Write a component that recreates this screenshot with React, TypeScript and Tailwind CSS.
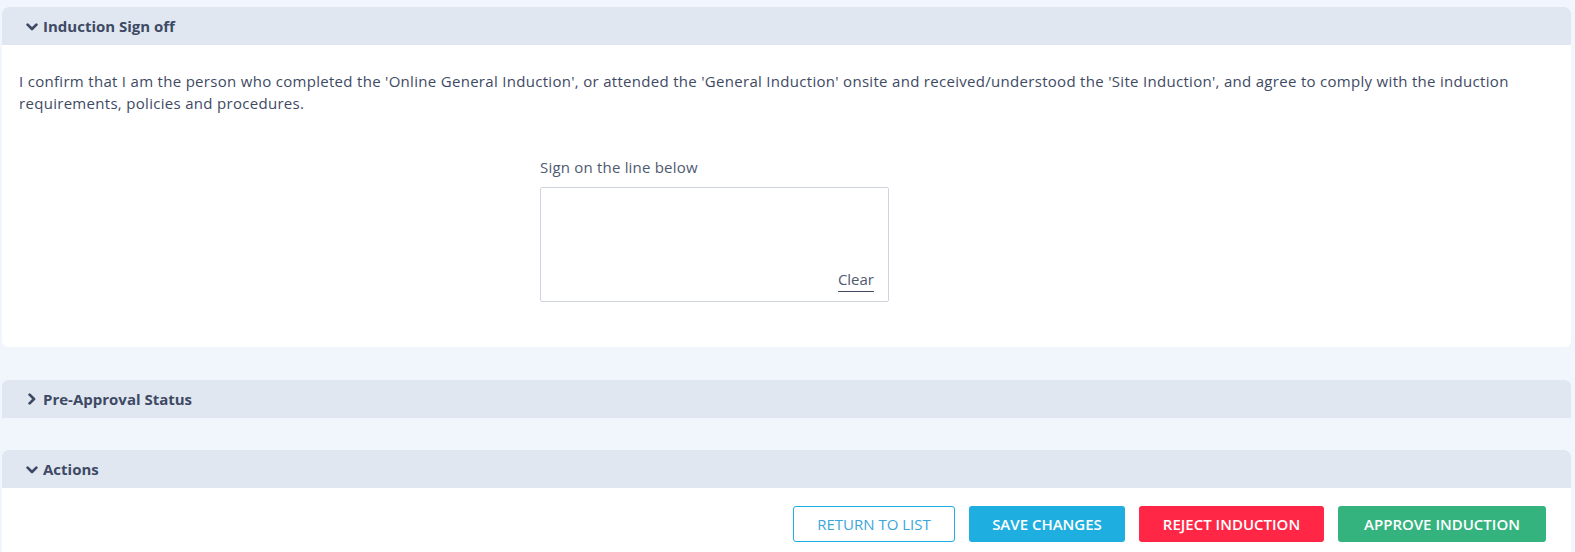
function Chevron({ open }: { open: boolean }) {
  return open ? (
    <svg width="12" height="8" viewBox="0 0 12 8" className="mt-[1px] shrink-0">
      <path d="M1.6 1.6 L6 6 L10.4 1.6" fill="none" stroke="currentColor" strokeWidth="2.7" strokeLinecap="round" strokeLinejoin="round" />
    </svg>
  ) : (
    <svg width="12" height="12" viewBox="0 0 12 12" className="shrink-0">
      <path d="M3.6 1.6 L8 6 L3.6 10.4" fill="none" stroke="currentColor" strokeWidth="2.7" strokeLinecap="round" strokeLinejoin="round" />
    </svg>
  );
}

function SectionHeader({ title, open }: { title: string; open: boolean }) {
  return (
    <div className="flex h-[38px] items-center gap-[5px] rounded-t-[6px] bg-[#e1e7f1] pl-[24px] text-[15px] font-bold text-[#3e4a64]">
      <Chevron open={open} />
      <span>{title}</span>
    </div>
  );
}

export default function App() {
  return (
    <div
      className="h-[552px] overflow-hidden bg-[#f1f5fc] pl-[2px] pr-[4px] pt-[7px] text-[#3e4a64]"
      style={{ fontFamily: '"Open Sans", "Liberation Sans", sans-serif' }}
    >
      <div className="overflow-hidden rounded-[6px] bg-white">
        <SectionHeader title="Induction Sign off" open />
        <div className="px-[17px] pb-[45px] pt-[25px]">
          <p className="text-[15px] leading-[22px] tracking-[0.3px] text-[#3e4a64]">
            I confirm that I am the person who completed the 'Online General Induction', or attended the 'General Induction' onsite and received/understood the 'Site Induction', and agree to comply with the induction requirements, policies and procedures.
          </p>
          <div className="mt-[42px] flex justify-center pr-[144px]">
            <div className="w-[349px]">
              <div className="text-[15px] leading-[22px] tracking-[0.2px] text-[#4f5a70]">Sign on the line below</div>
              <div className="mt-[9px] flex h-[115px] items-end justify-end rounded-[2px] border border-[#cfd3de] px-[14px] pb-[9px]">
                <span className="border-b border-[#3e4a64] pb-[4px] text-[15px] leading-[16px] text-[#4f5a70]">Clear</span>
              </div>
            </div>
          </div>
        </div>
      </div>

      <div className="mt-[33px] overflow-hidden rounded-t-[6px]">
        <SectionHeader title="Pre-Approval Status" open={false} />
      </div>

      <div className="mt-[32px] overflow-hidden rounded-t-[6px] bg-white">
        <SectionHeader title="Actions" open />
        <div className="flex justify-end gap-[14px] px-[25px] pb-[12px] pt-[18px] text-[15px]">
          <button className="h-[36px] w-[162px] rounded-[3px] border border-[#1eaee0] bg-white text-[#3aa6da]">
            RETURN TO LIST
          </button>
          <button className="h-[36px] w-[156px] rounded-[3px] bg-[#1eaee0] font-semibold text-white">
            SAVE CHANGES
          </button>
          <button className="h-[36px] w-[185px] rounded-[3px] bg-[#ff2745] font-semibold text-white">
            REJECT INDUCTION
          </button>
          <button className="h-[36px] w-[208px] rounded-[3px] bg-[#34b37f] font-semibold text-white">
            APPROVE INDUCTION
          </button>
        </div>
      </div>
    </div>
  );
}
